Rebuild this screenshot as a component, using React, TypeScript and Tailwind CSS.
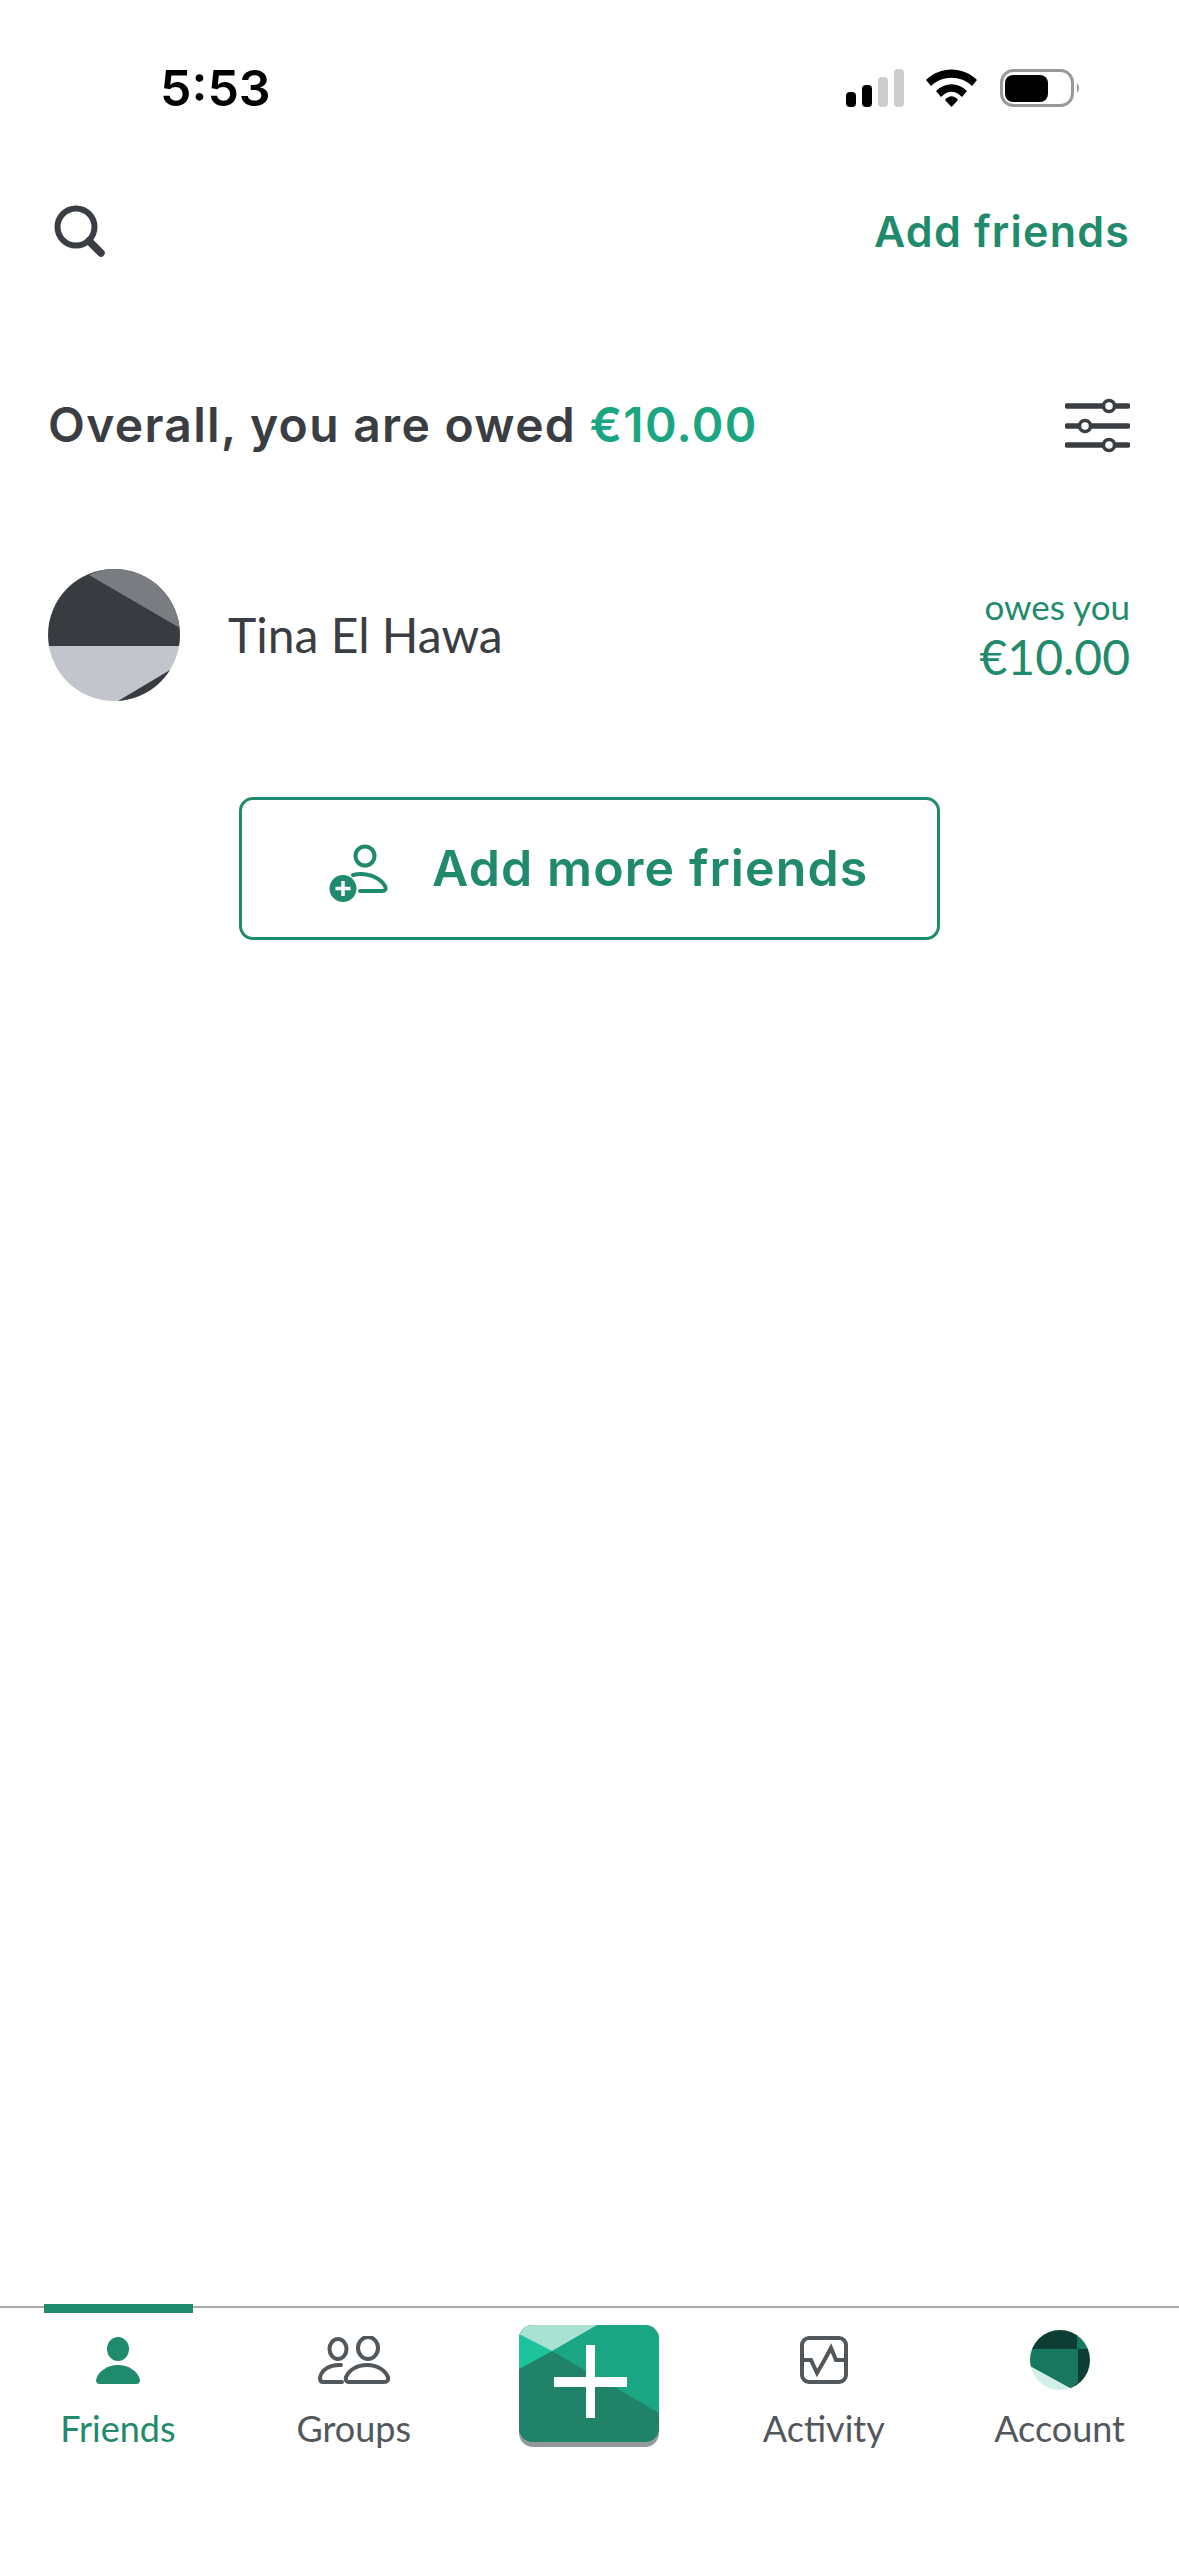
import React from 'react';

const StatusIcons: React.FC = () => (
    <svg width="235" height="38" viewBox="0 0 235 38" fill="none">
        <rect x="0" y="23" width="10" height="15" rx="4" fill="#000" />
        <rect x="16" y="16" width="10" height="22" rx="4" fill="#000" />
        <rect x="32" y="8" width="10" height="30" rx="4" fill="#ccc" />
        <rect x="48" y="0" width="10" height="38" rx="4" fill="#ccc" />
        <path d="M80 11 C94 -3 117 -3 131 11 L126 17 C115 6 96 6 85 17 Z" fill="#000" />
        <path d="M90 22 C99 13 112 13 121 22 L116 28 C109 21 102 21 95 28 Z" fill="#000" />
        <path d="M99 31 C103 26 108 26 112 31 L105.5 38 Z" fill="#000" />
        <rect x="155.5" y="1.5" width="71" height="35" rx="12" stroke="#999" strokeWidth="3" />
        <rect x="159" y="6" width="43" height="27" rx="8" fill="#000" />
        <path d="M231 14 Q235 19 231 24 Z" fill="#999" />
    </svg>
);

const SearchIcon: React.FC = () => (
    <svg width="51" height="52" viewBox="0 0 51 52" fill="none" stroke="#3a3d42" strokeLinecap="round">
        <circle cx="22" cy="22" r="18.5" strokeWidth="6" />
        <path d="M35 36 L47 48" strokeWidth="7.5" />
    </svg>
);

const FilterIcon: React.FC = () => (
    <svg width="65" height="55" viewBox="0 0 65 55" fill="none" stroke="#3a3d42" strokeLinecap="round">
        <path d="M2 8 H63 M2 28 H63 M2 47 H63" strokeWidth="5.5" />
        <circle cx="44" cy="8" r="5.5" fill="#fff" strokeWidth="3.5" />
        <circle cx="20" cy="28" r="5.5" fill="#fff" strokeWidth="3.5" />
        <circle cx="44" cy="47" r="5.5" fill="#fff" strokeWidth="3.5" />
    </svg>
);

const TinaAvatar: React.FC = () => (
    <svg width="132" height="132" viewBox="0 0 132 132" className="shrink-0 rounded-full">
        <rect width="132" height="77" fill="#383b40" />
        <rect y="77" width="132" height="55" fill="#c3c5cc" />
        <polygon points="41,6 70,-6 140,0 132,59" fill="#797c80" />
        <polygon points="70,132 122,101 140,132" fill="#383b40" />
    </svg>
);

const AddFriendIcon: React.FC = () => (
    <svg width="59" height="58" viewBox="0 0 59 58" fill="none" stroke="#1f8a6c" className="mt-[9px]">
        <circle cx="36" cy="12" r="9.5" strokeWidth="4" />
        <path d="M24 31 C36 28 50 32 56 42 Q58 47 53 47 H31" strokeWidth="4" strokeLinecap="round" />
        <circle cx="14" cy="44.5" r="13.5" fill="#1f8a6c" stroke="none" />
        <path d="M14 37 V52 M6.5 44.5 H21.5" stroke="#fff" strokeWidth="3.5" />
    </svg>
);

const FriendsIcon: React.FC = () => (
    <svg width="44" height="47" viewBox="0 0 44 47" fill="#1f8a6c">
        <ellipse cx="22" cy="12" rx="11" ry="12" />
        <path d="M4 47 H40 Q44 47 44 43 C42 34 32 28 22 28 C12 28 2 34 0 43 Q0 47 4 47 Z" />
    </svg>
);

const GroupsIcon: React.FC = () => (
    <svg width="72" height="48" viewBox="0 0 72 48" fill="none" stroke="#52575c" strokeWidth="4">
        <ellipse cx="20" cy="13" rx="8.5" ry="10" />
        <ellipse cx="50" cy="12" rx="10" ry="11" />
        <path d="M23 29 C12 28 3 34 2 42 Q2 46 5 46 H24" strokeLinecap="round" />
        <path d="M31 46 H66 Q71 46 70 41 C67 34 59 29 49 29 C39 29 31 34 28 41 Q27 46 31 46 Z" />
    </svg>
);

const ActivityIcon: React.FC = () => (
    <svg width="48" height="48" viewBox="0 0 48 48" fill="none" stroke="#52575c">
        <rect x="2" y="2" width="44" height="44" rx="7" strokeWidth="4" />
        <polyline points="3,24 11,24 17,37 24.5,24 31,12 36,24 45,24" strokeWidth="4" />
    </svg>
);

const AccountAvatar: React.FC = () => (
    <svg width="60" height="60" viewBox="0 0 60 60" className="rounded-full">
        <rect width="60" height="60" fill="#d3f0e8" />
        <polygon points="0,19 48,19 48,52 40,58 0,36" fill="#17775f" />
        <rect width="48" height="19" fill="#0d3d33" />
        <rect x="47" width="13" height="19" fill="#17775f" />
        <polygon points="48,19 60,19 60,60 40,60 40,58 48,52" fill="#0d3d33" />
    </svg>
);

const PlusButton: React.FC = () => (
    <button type="button" className="mt-[17px] flex h-[122px] w-[140px] items-start overflow-hidden rounded-[14px] bg-[#95999c]">
        <svg width="140" height="117" viewBox="0 0 140 117" className="rounded-b-[14px]">
            <rect width="140" height="117" fill="#1aa682" />
            <polygon points="0,44 33,26 140,88 140,117 0,117" fill="#208368" />
            <polygon points="0,9 33,26 0,44" fill="#1dc39c" />
            <polygon points="0,0 78,0 33,26 0,9" fill="#a9e2d2" />
            <rect x="67" y="20" width="9" height="73" fill="#fff" />
            <rect x="35" y="52" width="73" height="10" fill="#fff" />
        </svg>
    </button>
);

const tabs = [
    { label: 'Friends', icon: <FriendsIcon />, active: true, inset: '' },
    { label: 'Groups', icon: <GroupsIcon />, active: false, inset: '' },
    null,
    { label: 'Activity', icon: <ActivityIcon />, active: false, inset: 'pr-[3px]' },
    { label: 'Account', icon: <AccountAvatar />, active: false, inset: 'pr-[3px]' },
];

const App: React.FC = () => {
    return (
        <div className="flex h-[2556px] w-[1179px] flex-col bg-white font-['Lato',sans-serif] text-[#3a3d42]">
            {/* status bar */}
            <div className="flex h-[176px] shrink-0 items-center justify-between pl-[160px] pr-[98px]">
                <span className="font-['Inter',sans-serif] text-[50px] font-semibold leading-none text-black">5:53</span>
                <StatusIcons />
            </div>

            {/* header */}
            <div className="flex h-[110px] shrink-0 items-center justify-between pl-[54px] pr-[49px]">
                <SearchIcon />
                <span className="font-['Inter',sans-serif] text-[43px] font-semibold tracking-[1.2px] text-[#1f8a6c]">Add friends</span>
            </div>

            {/* summary */}
            <div className="flex h-[278px] shrink-0 items-center justify-between pl-[48px] pr-[49px]">
                <h1 className="font-['Inter',sans-serif] text-[48px] font-semibold tracking-[1.3px]">
                    Overall, you are owed <span className="text-[#1aa682]">€10.00</span>
                </h1>
                <FilterIcon />
            </div>

            {/* friend row */}
            <div className="mt-[5px] flex h-[132px] shrink-0 items-center pl-[48px] pr-[49px]">
                <TinaAvatar />
                <span className="ml-[48px] flex-1 text-[48px]">Tina El Hawa</span>
                <div className="flex flex-col items-end text-[#1f8a6c]">
                    <span className="text-[35px] leading-[40px]">owes you</span>
                    <span className="mt-[3px] text-[48px] leading-[56px]">€10.00</span>
                </div>
            </div>

            <button
                type="button"
                className="mx-auto mt-[96px] flex h-[143px] w-[701px] shrink-0 items-center rounded-[14px] border-[3px] border-[#1f8a6c] pl-[87px]"
            >
                <AddFriendIcon />
                <span className="ml-[44px] font-['Inter',sans-serif] text-[50px] font-semibold tracking-[1.1px] text-[#1f8a6c]">Add more friends</span>
            </button>

            <div className="flex-1" />

            {/* tab bar */}
            <nav className="relative grid h-[250px] shrink-0 grid-cols-5 border-t-2 border-[#aaaaaa]">
                <div className="absolute -top-[4px] left-[44px] h-[9px] w-[149px] bg-[#1f8a6c]" />
                {tabs.map((tab, i) =>
                    tab ? (
                        <div key={i} className={`flex flex-col items-center pt-[22px] ${tab.inset}`}>
                            <div className="flex h-[60px] items-center justify-center">{tab.icon}</div>
                            <span className={`mt-[16px] text-[36px] leading-[44px] ${tab.active ? 'text-[#1f8a6c]' : 'text-[#52575c]'}`}>
                                {tab.label}
                            </span>
                        </div>
                    ) : (
                        <div key={i} className="flex justify-center">
                            <PlusButton />
                        </div>
                    )
                )}
            </nav>
        </div>
    );
};

export default App;
